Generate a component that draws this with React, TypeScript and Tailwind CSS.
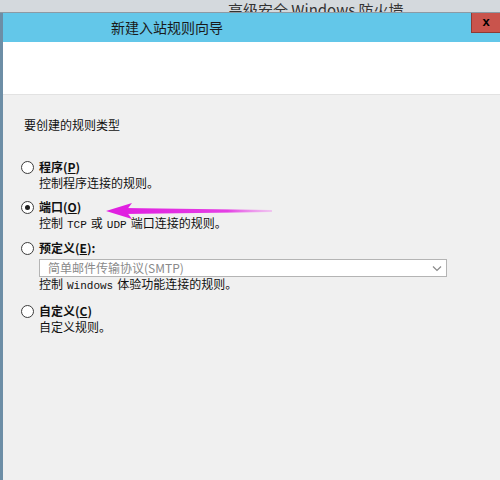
import React from 'react';

const cjk = "font-['Noto_Sans_CJK_SC',sans-serif]";

function Mono({ children }: { children: React.ReactNode }) {
  return <span className="font-['Liberation_Mono',monospace] text-[11px] mx-[4px]">{children}</span>;
}

function Radio({ checked }: { checked?: boolean }) {
  return (
    <span className="w-[13px] h-[13px] rounded-full border border-[#3c3c3c] bg-white flex items-center justify-center shrink-0">
      {checked && <span className="w-[5px] h-[5px] rounded-full bg-[#1e1e1e]" />}
    </span>
  );
}

function Option({
  label,
  keyChar,
  suffix,
  checked,
  children,
  className,
}: {
  label: string;
  keyChar: string;
  suffix?: string;
  checked?: boolean;
  children: React.ReactNode;
  className?: string;
}) {
  return (
    <div className={className}>
      <div className="flex items-center gap-[5px] h-[16px]">
        <Radio checked={checked} />
        <span className="font-bold text-[12px] leading-[16px] text-[#111]">
          {label}(<span className="underline">{keyChar}</span>){suffix}
        </span>
      </div>
      <div className="pl-[18px]">{children}</div>
    </div>
  );
}

export default function App() {
  return (
    <div className={`relative w-[500px] h-[480px] overflow-hidden bg-[#f0f0f0] flex flex-col ${cjk}`}>
      {/* parent window title, mostly cut off at the top edge */}
      <div className="h-[12px] bg-[#d4d9dd] overflow-hidden flex items-end pl-[228px] shrink-0">
        <span className="text-[15px] leading-[15px] text-[#333] mb-[-5px] whitespace-nowrap">高级安全 Windows 防火墙</span>
      </div>
      <div className="h-[1px] bg-[#8c9aa4] shrink-0" />

      <div className="flex-1 flex flex-col border-l-[3px] border-[#6d8ea6]">
        {/* wizard title bar */}
        <div className="h-[29px] bg-[#63c7e9] flex items-start justify-between shrink-0">
          <span className="pl-[108px] text-[14px] leading-[29px] text-[#1a1a1a]">新建入站规则向导</span>
          <div className="w-[29px] h-[20px] bg-[#c9544c] border-l border-b border-[#8e3a34] flex items-center justify-center">
            <span className="font-['Liberation_Sans',sans-serif] font-bold text-[13px] leading-none text-black mt-[-2px]">x</span>
          </div>
        </div>

        {/* header area */}
        <div className="h-[53px] bg-white border-b border-[#e2e2e2] shrink-0" />

        {/* body */}
        <div className="pl-[18px] pt-[22px] text-[12px] text-[#111]">
          <div className="leading-[16px] pl-[3px]">要创建的规则类型</div>

          <Option label="程序" keyChar="P" className="mt-[26px]">
            <div className="leading-[16px]">控制程序连接的规则。</div>
          </Option>

          <Option label="端口" keyChar="O" checked className="mt-[8px]">
            <div className="leading-[16px]">
              控制<Mono>TCP</Mono>或<Mono>UDP</Mono>端口连接的规则。
            </div>
          </Option>

          <Option label="预定义" keyChar="E" suffix=":" className="mt-[7px]">
            <div className="mt-[3px] w-[408px] h-[18px] bg-white border border-[#b4b4b4] flex items-center justify-between pl-[8px] pr-[4px]">
              <span className="text-[12px] leading-none text-[#8a8a8a]">简单邮件传输协议(SMTP)</span>
              <svg width="10" height="7" viewBox="0 0 10 7" fill="none">
                <path d="M1 1.5 L5 5.5 L9 1.5" stroke="#8a8a8a" strokeWidth="1.2" />
              </svg>
            </div>
            <div className="leading-[14px]">
              控制<Mono>Windows</Mono>体验功能连接的规则。
            </div>
          </Option>

          <Option label="自定义" keyChar="C" className="mt-[10px]">
            <div className="leading-[16px]">自定义规则。</div>
          </Option>
        </div>
      </div>

      {/* magenta annotation arrow */}
      <svg className="absolute left-[104px] top-[200px]" width="172" height="22" viewBox="0 0 172 22">
        <defs>
          <linearGradient id="tail" x1="0" y1="0" x2="1" y2="0">
            <stop offset="0" stopColor="#e020e0" />
            <stop offset="0.7" stopColor="#e43fe4" />
            <stop offset="1" stopColor="#f0a8f0" stopOpacity="0.6" />
          </linearGradient>
        </defs>
        <path d="M20 8 L168 10 L168 12 L20 14 Z" fill="url(#tail)" />
        <path d="M2 11 L28 3 L22 11 L28 19 Z" fill="#e020e0" />
      </svg>
    </div>
  );
}
